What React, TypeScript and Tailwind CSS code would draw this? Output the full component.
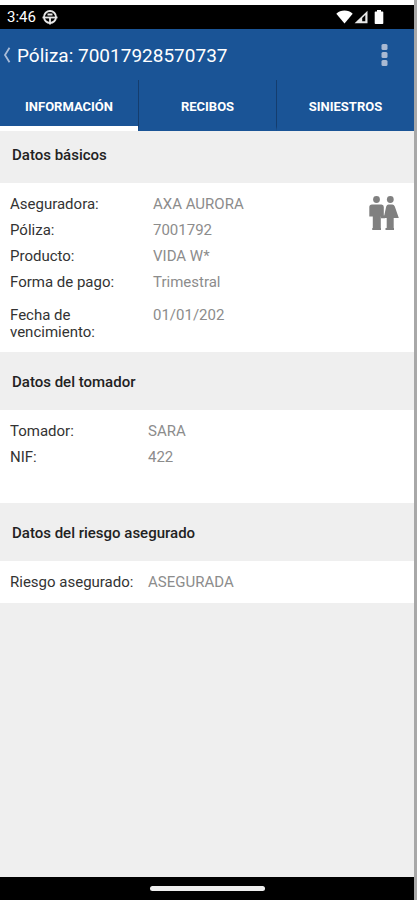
import { useState, type ReactNode } from "react";
import clsx from "clsx";

const TABS = ["INFORMACIÓN", "RECIBOS", "SINIESTROS"];

function StatusBar() {
  return (
    <div className="flex h-6 items-center bg-black pr-[30px] pl-[7px] text-white">
      <span className="text-[15px] leading-6">3:46</span>
      <svg className="ml-[6px] h-4 w-4" viewBox="0 0 16 16" fill="none" stroke="#e8e8e8" strokeWidth="1.800">
        <circle cx="8" cy="8" r="6" />
        <path d="M.5 8.500h15" />
        <path d="M5.500 5.500h5M8 8v7.500" />
      </svg>
      <svg className="ml-auto h-[14px] w-[17px]" viewBox="0 0 17 14" fill="#fff">
        <path d="M.3 3.800C2.600 1.600 5.300.6 8.500.6s5.900 1 8.200 3.200L8.500 13.400z" />
      </svg>
      <svg className="ml-px h-[14px] w-[14px]" viewBox="0 0 14 14">
        <path d="M13.500.8v12.400H.6z" fill="#e8e8e8" />
        <path d="M11.300 5v6.300H8.200V8z" fill="#000" />
      </svg>
      <svg className="ml-[6px] h-[14px] w-[10px]" viewBox="0 0 10 14" fill="#fff">
        <path d="M3 0h4v1.500h1.500q.8 0 .8.800v10.900q0 .8-.8.800h-7q-.8 0-.8-.8V2.300q0-.8.8-.8H3z" />
      </svg>
    </div>
  );
}

function CoupleIcon() {
  return (
    <svg className="h-[34px] w-[30px] shrink-0" viewBox="0 0 30 34" fill="#808080">
      <circle cx="7.500" cy="3.500" r="3.400" />
      <circle cx="21.300" cy="3.500" r="3.400" />
      <path d="M3 8.500h9.500q2.300 0 2.300 2.500v9.500h-3V34H3.800V20.500H.3V11Q.3 8.500 3 8.500z" />
      <path d="M19.500 8.500h3.800q1.700 0 2.500 2L29.800 22H24.700v12h-7V22h-3l2.500-11.500q.6-2 2.300-2z" />
      <path d="M3.300 32H12v2H3.300zM16.500 32H25v2h-8.500zM12 19.500h4v2.800h-4z" />
    </svg>
  );
}

function Section({ title, first, children }: { title: string; first?: boolean; children: ReactNode }) {
  return (
    <section>
      <h2
        className={clsx(
          "flex items-center px-3 text-[15px] font-medium text-[#222]",
          first ? "h-[52px] pb-1" : "h-[58px] pt-[2px]"
        )}
      >
        {title}
      </h2>
      <div className="flex items-start bg-white px-[10px] pt-2 pb-2">{children}</div>
    </section>
  );
}

function Row({ label, value, wide }: { label: string; value: string; wide?: boolean }) {
  return (
    <div className="flex leading-[26px]">
      <dt className={clsx("shrink-0 text-[#333]", wide ? "w-[143px]" : "w-[138px]")}>{label}</dt>
      <dd className="text-[#8c8c8c]">{value}</dd>
    </div>
  );
}

export default function App() {
  const [active, setActive] = useState(0);

  return (
    <div className="flex min-h-screen flex-col border-r-3 border-[#a8a8a8] bg-[#efefef] pt-[5px] font-['Roboto',sans-serif] text-[15px] shadow-[inset_0_5px_0_#fff]">
      <StatusBar />

      <header className="bg-[#1a5496] text-white">
        <div className="flex h-[51px] items-center pr-[26px] pl-[3px]">
          <button aria-label="Volver" className="mr-[6px]">
            <svg className="h-4 w-2" viewBox="0 0 8 16" fill="none" stroke="#a9bcd8" strokeWidth="1.800">
              <path d="M6.500.8L2 8l4.500 7.200" />
            </svg>
          </button>
          <h1 className="pt-[3px] text-[19px]">Póliza: 70017928570737</h1>
          <button aria-label="Más opciones" className="ml-auto">
            <svg className="h-[22px] w-[7px]" viewBox="0 0 7 22" fill="#a9b9d2">
              <rect x=".5" y="0" width="6" height="6" rx="1.500" />
              <rect x=".5" y="8" width="6" height="6" rx="1.500" />
              <rect x=".5" y="16" width="6" height="6" rx="1.500" />
            </svg>
          </button>
        </div>

        <nav className="grid grid-cols-3">
          {TABS.map((tab, i) => (
            <button
              key={tab}
              onClick={() => setActive(i)}
              className={clsx(
                "h-[51px] border-b-5 pt-[7px] text-[13px] font-bold",
                i > 0 && "border-l border-l-[#143d6e]",
                active === i ? "border-b-white" : "border-b-[#1a5496]"
              )}
            >
              {tab}
            </button>
          ))}
        </nav>
      </header>

      <main>
        <Section title="Datos básicos" first>
          <dl className="grow pb-[3px]">
            <Row wide label="Aseguradora:" value="AXA AURORA" />
            <Row wide label="Póliza:" value="7001792" />
            <Row wide label="Producto:" value="VIDA W*" />
            <Row wide label="Forma de pago:" value="Trimestral" />
            <div className="mt-3 flex leading-[17px]">
              <dt className="w-[143px] shrink-0 pr-10 text-[#333]">Fecha de vencimiento:</dt>
              <dd className="text-[#8c8c8c]">01/01/202</dd>
            </div>
          </dl>
          <div className="mt-[5px] mr-[5px]">
            <CoupleIcon />
          </div>
        </Section>

        <Section title="Datos del tomador">
          <dl className="pb-[25px]">
            <Row label="Tomador:" value="SARA" />
            <Row label="NIF:" value="422" />
          </dl>
        </Section>

        <Section title="Datos del riesgo asegurado">
          <dl>
            <Row label="Riesgo asegurado:" value="ASEGURADA" />
          </dl>
        </Section>
      </main>

      <div className="mt-auto flex h-[23px] items-center justify-center bg-black">
        <div className="h-[5px] w-[115px] rounded-full bg-[#eee]" />
      </div>
    </div>
  );
}
